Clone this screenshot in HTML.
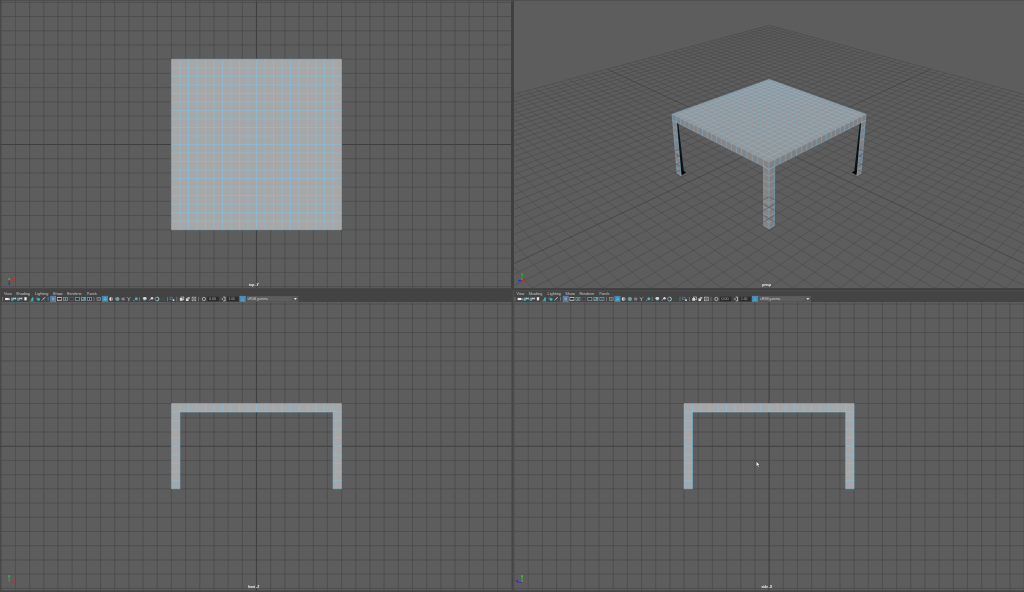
<!DOCTYPE html>
<html><head><meta charset="utf-8"><title>Maya four view</title>
<style>
html,body{margin:0;padding:0;background:#5d5d5d;}
body{width:1024px;height:592px;overflow:hidden;position:relative;font-family:"Liberation Sans",sans-serif;}
svg{position:absolute;left:0;top:0;display:block}
text{font-family:"Liberation Sans",sans-serif}
</style></head><body>
<svg width="1024" height="592" viewBox="0 0 1024 592">
<defs>
<clipPath id="cTL"><rect x="0" y="0" width="511.1" height="288.2"/></clipPath>
<clipPath id="cTR"><rect x="513.85" y="0" width="510.15" height="288.2"/></clipPath>
<clipPath id="cBL"><rect x="0" y="302" width="512" height="290"/></clipPath>
<clipPath id="cBR"><rect x="513.4" y="302" width="510.6" height="290"/></clipPath>
</defs>
<rect width="1024" height="592" fill="#5d5d5d"/>

<g clip-path="url(#cTL)" stroke="#494949" stroke-width="0.7" fill="none">
<path d="M1.26 0V288.6M15.44 0V288.6M29.62 0V288.6M43.8 0V288.6M57.98 0V288.6M72.16 0V288.6M86.34 0V288.6M100.52 0V288.6M114.7 0V288.6M128.88 0V288.6M143.06 0V288.6M157.24 0V288.6M171.42 0V288.6M185.6 0V288.6M199.78 0V288.6M213.96 0V288.6M228.14 0V288.6M242.32 0V288.6M270.68 0V288.6M284.86 0V288.6M299.04 0V288.6M313.22 0V288.6M327.4 0V288.6M341.58 0V288.6M355.76 0V288.6M369.94 0V288.6M384.12 0V288.6M398.3 0V288.6M412.48 0V288.6M426.66 0V288.6M440.84 0V288.6M455.02 0V288.6M469.2 0V288.6M483.38 0V288.6M497.56 0V288.6M511.74 0V288.6M0 2.35H511.6M0 16.56H511.6M0 30.78H511.6M0 45H511.6M0 59.21H511.6M0 73.42H511.6M0 87.64H511.6M0 101.86H511.6M0 116.07H511.6M0 130.28H511.6M0 158.72H511.6M0 172.93H511.6M0 187.14H511.6M0 201.36H511.6M0 215.57H511.6M0 229.79H511.6M0 244H511.6M0 258.22H511.6M0 272.44H511.6M0 286.65H511.6"/>
<path stroke="#404040" stroke-width="1.15" d="M256.5 0V288.6M0 144.5H511.6"/>
</g>
<g clip-path="url(#cBL)" stroke="#494949" stroke-width="0.7" fill="none">
<path d="M1.26 302V592M15.44 302V592M29.62 302V592M43.8 302V592M57.98 302V592M72.16 302V592M86.34 302V592M100.52 302V592M114.7 302V592M128.88 302V592M143.06 302V592M157.24 302V592M171.42 302V592M185.6 302V592M199.78 302V592M213.96 302V592M228.14 302V592M242.32 302V592M270.68 302V592M284.86 302V592M299.04 302V592M313.22 302V592M327.4 302V592M341.58 302V592M355.76 302V592M369.94 302V592M384.12 302V592M398.3 302V592M412.48 302V592M426.66 302V592M440.84 302V592M455.02 302V592M469.2 302V592M483.38 302V592M497.56 302V592M511.74 302V592M0 304.05H511.6M0 318.26H511.6M0 332.48H511.6M0 346.69H511.6M0 360.91H511.6M0 375.12H511.6M0 389.34H511.6M0 403.56H511.6M0 417.77H511.6M0 431.99H511.6M0 460.41H511.6M0 474.63H511.6M0 488.84H511.6M0 503.06H511.6M0 517.27H511.6M0 531.49H511.6M0 545.7H511.6M0 559.92H511.6M0 574.13H511.6M0 588.35H511.6"/>
<path stroke="#404040" stroke-width="1.15" d="M256.5 302V592M0 446.2H511.6"/>
</g>
<g clip-path="url(#cBR)" stroke="#494949" stroke-width="0.7" fill="none">
<path d="M514.04 302V592M528.21 302V592M542.38 302V592M556.55 302V592M570.72 302V592M584.89 302V592M599.06 302V592M613.23 302V592M627.4 302V592M641.57 302V592M655.74 302V592M669.91 302V592M684.08 302V592M698.25 302V592M712.42 302V592M726.59 302V592M740.76 302V592M754.93 302V592M783.27 302V592M797.44 302V592M811.61 302V592M825.78 302V592M839.95 302V592M854.12 302V592M868.29 302V592M882.46 302V592M896.63 302V592M910.8 302V592M924.97 302V592M939.14 302V592M953.31 302V592M967.48 302V592M981.65 302V592M995.82 302V592M1009.99 302V592M1024.16 302V592M513.6 304.05H1024M513.6 318.26H1024M513.6 332.48H1024M513.6 346.69H1024M513.6 360.91H1024M513.6 375.12H1024M513.6 389.34H1024M513.6 403.56H1024M513.6 417.77H1024M513.6 431.99H1024M513.6 460.41H1024M513.6 474.63H1024M513.6 488.84H1024M513.6 503.06H1024M513.6 517.27H1024M513.6 531.49H1024M513.6 545.7H1024M513.6 559.92H1024M513.6 574.13H1024M513.6 588.35H1024"/>
<path stroke="#404040" stroke-width="1.15" d="M769.1 302V592M513.6 446.2H1024"/>
</g>
<rect x="171.42" y="59.21" width="170.16" height="170.58" fill="#a8a7a7"/>
<g stroke="#74c8f0" stroke-width="0.95" stroke-opacity="0.5" fill="none"><path d="M171.42 59.21V229.79M179.93 59.21V229.79M188.44 59.21V229.79M196.94 59.21V229.79M205.45 59.21V229.79M213.96 59.21V229.79M222.47 59.21V229.79M230.98 59.21V229.79M239.48 59.21V229.79M247.99 59.21V229.79M256.5 59.21V229.79M265.01 59.21V229.79M273.52 59.21V229.79M282.02 59.21V229.79M290.53 59.21V229.79M299.04 59.21V229.79M307.55 59.21V229.79M316.06 59.21V229.79M324.56 59.21V229.79M333.07 59.21V229.79M341.58 59.21V229.79"/><path d="M171.42 59.21H341.58M171.42 67.74H341.58M171.42 76.27H341.58M171.42 84.8H341.58M171.42 93.33H341.58M171.42 101.86H341.58M171.42 110.38H341.58M171.42 118.91H341.58M171.42 127.44H341.58M171.42 135.97H341.58M171.42 144.5H341.58M171.42 153.03H341.58M171.42 161.56H341.58M171.42 170.09H341.58M171.42 178.62H341.58M171.42 187.14H341.58M171.42 195.67H341.58M171.42 204.2H341.58M171.42 212.73H341.58M171.42 221.26H341.58M171.42 229.79H341.58"/></g>
<path d="M171.42 403.56H341.58V488.84H333.07V412.06H179.93V488.84H171.42Z" fill="#a8a7a7"/>
<g stroke="#74c8f0" stroke-width="0.95" stroke-opacity="0.5" fill="none"><path d="M171.42 403.56V412.06M179.93 403.56V412.06M188.44 403.56V412.06M196.94 403.56V412.06M205.45 403.56V412.06M213.96 403.56V412.06M222.47 403.56V412.06M230.98 403.56V412.06M239.48 403.56V412.06M247.99 403.56V412.06M256.5 403.56V412.06M265.01 403.56V412.06M273.52 403.56V412.06M282.02 403.56V412.06M290.53 403.56V412.06M299.04 403.56V412.06M307.55 403.56V412.06M316.06 403.56V412.06M324.56 403.56V412.06M333.07 403.56V412.06M341.58 403.56V412.06M171.42 412.06V488.84M179.93 412.06V488.84M333.07 412.06V488.84M341.58 412.06V488.84"/><path d="M171.42 403.56H341.58M171.42 412.06H341.58M171.42 420.59H179.93M333.07 420.59H341.58M171.42 429.13H179.93M333.07 429.13H341.58M171.42 437.66H179.93M333.07 437.66H341.58M171.42 446.19H179.93M333.07 446.19H341.58M171.42 454.72H179.93M333.07 454.72H341.58M171.42 463.25H179.93M333.07 463.25H341.58M171.42 471.78H179.93M333.07 471.78H341.58M171.42 480.31H179.93M333.07 480.31H341.58M171.42 488.84H179.93M333.07 488.84H341.58"/></g>
<path d="M683.97 403.56H854.13V488.84H845.62V412.06H692.48V488.84H683.97Z" fill="#a8a7a7"/>
<g stroke="#74c8f0" stroke-width="0.95" stroke-opacity="0.5" fill="none"><path d="M683.97 403.56V412.06M692.48 403.56V412.06M700.99 403.56V412.06M709.49 403.56V412.06M718 403.56V412.06M726.51 403.56V412.06M735.02 403.56V412.06M743.53 403.56V412.06M752.03 403.56V412.06M760.54 403.56V412.06M769.05 403.56V412.06M777.56 403.56V412.06M786.07 403.56V412.06M794.57 403.56V412.06M803.08 403.56V412.06M811.59 403.56V412.06M820.1 403.56V412.06M828.61 403.56V412.06M837.11 403.56V412.06M845.62 403.56V412.06M854.13 403.56V412.06M683.97 412.06V488.84M692.48 412.06V488.84M845.62 412.06V488.84M854.13 412.06V488.84"/><path d="M683.97 403.56H854.13M683.97 412.06H854.13M683.97 420.59H692.48M845.62 420.59H854.13M683.97 429.13H692.48M845.62 429.13H854.13M683.97 437.66H692.48M845.62 437.66H854.13M683.97 446.19H692.48M845.62 446.19H854.13M683.97 454.72H692.48M845.62 454.72H854.13M683.97 463.25H692.48M845.62 463.25H854.13M683.97 471.78H692.48M845.62 471.78H854.13M683.97 480.31H692.48M845.62 480.31H854.13M683.97 488.84H692.48M845.62 488.84H854.13"/></g>
<g clip-path="url(#cTR)">
<path d="M769.06,25.34L328.3,144.58M769.06,25.34L1209.81,144.58M773.66,26.59L330.51,148.3M764.45,26.59L1207.6,148.3M778.33,27.85L332.78,152.12M759.78,27.85L1205.34,152.12M783.08,29.13L335.1,156.03M755.04,29.13L1203.01,156.03M787.89,30.44L337.49,160.06M750.22,30.44L1200.62,160.06M792.78,31.76L339.95,164.2M745.33,31.76L1198.16,164.2M797.75,33.11L342.48,168.45M740.36,33.11L1195.64,168.45M802.8,34.47L345.07,172.82M735.31,34.47L1193.04,172.82M807.93,35.86L347.74,177.32M730.18,35.86L1190.37,177.32M813.14,37.27L350.49,181.95M724.97,37.27L1187.62,181.95M818.43,38.7L353.33,186.71M719.68,38.7L1184.79,186.71M823.82,40.16L356.24,191.63M714.3,40.16L1181.87,191.63M829.29,41.64L359.25,196.69M708.83,41.64L1178.86,196.69M834.85,43.14L362.35,201.9M703.27,43.14L1175.77,201.9M840.5,44.67L365.55,207.29M697.61,44.67L1172.57,207.29M846.25,46.23L368.84,212.84M691.86,46.23L1169.27,212.84M852.1,47.81L372.25,218.58M686.02,47.81L1165.86,218.58M858.04,49.42L375.77,224.5M680.07,49.42L1162.34,224.5M864.1,51.05L379.41,230.62M674.02,51.05L1158.7,230.62M870.25,52.72L383.17,236.96M667.86,52.72L1154.94,236.96M876.52,54.41L387.06,243.51M661.6,54.41L1151.05,243.51M882.89,56.14L391.1,250.3M655.22,56.14L1147.02,250.3M889.38,57.9L395.27,257.33M648.73,57.9L1142.84,257.33M895.99,59.68L399.6,264.62M642.12,59.68L1138.51,264.62M902.72,61.5L404.09,272.18M635.39,61.5L1134.02,272.18M909.58,63.36L408.76,280.04M628.54,63.36L1129.36,280.04M916.56,65.25L413.6,288.19M621.56,65.25L1124.51,288.19M923.67,67.17L418.64,296.67M614.45,67.17L1119.47,296.67M938.3,71.13L429.34,314.68M599.81,71.13L1108.78,314.68M945.83,73.17L435.02,324.26M592.28,73.17L1103.09,324.26M953.5,75.24L440.96,334.24M584.61,75.24L1097.16,334.24M961.33,77.36L447.15,344.67M576.78,77.36L1090.96,344.67M969.31,79.52L453.62,355.56M568.8,79.52L1084.49,355.56M977.46,81.72L460.39,366.96M560.66,81.72L1077.72,366.96M985.77,83.97L467.48,378.89M552.35,83.97L1070.63,378.89M994.25,86.26L474.91,391.4M543.87,86.26L1063.2,391.4M1002.9,88.61L482.71,404.53M535.21,88.61L1055.4,404.53M1011.74,91L490.9,418.33M526.38,91L1047.21,418.33M1020.76,93.44L499.52,432.84M517.35,93.44L1038.59,432.84M1029.98,95.93L508.6,448.12M508.14,95.93L1029.51,448.12M1039.39,98.48L518.18,464.25M498.72,98.48L1019.93,464.25M1049.01,101.08L528.3,481.28M489.1,101.08L1009.81,481.28M1058.85,103.74L539.01,499.31M479.26,103.74L999.11,499.31M1068.9,106.46L550.35,518.41M469.21,106.46L987.76,518.41M1079.19,109.24L562.4,538.69M458.93,109.24L975.71,538.69M1089.7,112.09L575.21,560.26M448.41,112.09L962.9,560.26M1100.46,115L588.87,583.25M437.65,115L949.25,583.25M1111.48,117.98L603.45,607.8M426.64,117.98L934.67,607.8M1122.75,121.03L619.05,634.07M415.36,121.03L919.06,634.07M1134.29,124.15L635.8,662.26M403.82,124.15L902.32,662.26M1146.12,127.35L653.81,692.58M392,127.35L884.31,692.58M1158.23,130.63L673.23,725.28M379.88,130.63L864.88,725.28M1170.64,133.99L694.25,760.66M367.47,133.99L843.86,760.66M1183.37,137.43L717.06,799.06M354.74,137.43L821.06,799.06M1196.42,140.96L741.9,840.88M341.69,140.96L796.21,840.88M1209.81,144.58L769.06,886.6M328.3,144.58L769.06,886.6" stroke="#494949" stroke-width="0.55" fill="none"/>
<path d="M930.92,69.13L423.88,305.49M607.2,69.13L1114.23,305.49" stroke="#3c3c3c" stroke-width="0.62" fill="none"/>
<polygon points="677.08,173.37 681.01,175.75 676.63,122.49 672.54,120.42" fill="#888282"/>
<polygon points="861.04,173.37 857.1,175.75 861.48,122.49 865.57,120.42" fill="#847f7f"/>
<polygon points="676.8,122.8 678.3,123.5 683.8,171 681.5,174.4" fill="#0d1418"/>
<polygon points="681.6,170.3 686.4,172.3 682,174.9" fill="#040404"/>
<polygon points="861.3,122.8 859.8,123.5 854.3,171 856.6,174.4" fill="#0d1418"/>
<polygon points="856.5,170.3 851.7,172.3 856.1,174.9" fill="#040404"/>
<polygon points="763.69,225.74 769.06,228.99 769.06,169.33 763.38,166.45" fill="#888282"/>
<polygon points="774.43,225.74 769.06,228.99 769.06,169.33 774.74,166.45" fill="#847f7f"/>
<polygon points="672.54,120.42 769.06,169.33 769.06,162.27 672.01,114.21" fill="#888282"/>
<polygon points="865.57,120.42 769.06,169.33 769.06,162.27 866.11,114.21" fill="#847f7f"/>
<polygon points="769.06,79.36 866.11,114.21 769.06,162.27 672.01,114.21" fill="#979596"/>
<g stroke="#74c8f0" stroke-width="0.8" stroke-opacity="0.45" fill="none">
<path d="M677.08,173.37L681.01,175.75M676.59,167.73L680.54,170.08M676.1,162.04L680.07,164.36M675.61,156.28L679.6,158.57M675.11,150.46L679.12,152.72M674.61,144.58L678.63,146.8M674.1,138.64L678.14,140.82M673.59,132.63L677.64,134.78M673.06,126.56L677.14,128.67M672.54,120.42L676.63,122.49M763.69,225.74L769.06,228.99M763.66,219.48L769.06,222.69M763.62,213.13L769.06,216.31M763.59,206.71L769.06,209.85M763.55,200.21L769.06,203.31M763.52,193.63L769.06,196.69M763.48,186.97L769.06,189.98M763.45,180.21L769.06,183.18M763.41,173.38L769.06,176.3M763.38,166.45L769.06,169.33M672.54,120.42L769.06,169.33M672.01,114.21L769.06,162.27M769.06,79.36L866.11,114.21M764.84,80.87L861.99,116.25M760.57,82.4L857.81,118.32M756.23,83.96L853.57,120.42M751.84,85.54L849.25,122.56M747.38,87.14L844.86,124.73M742.86,88.76L840.4,126.94M738.28,90.41L835.86,129.19M733.62,92.08L831.25,131.47M728.9,93.78L826.55,133.8M724.11,95.5L821.78,136.16M719.25,97.24L816.92,138.57M714.31,99.02L811.98,141.02M709.3,100.82L806.95,143.51M704.22,102.64L801.82,146.04M699.06,104.5L796.61,148.63M693.81,106.38L791.3,151.25M688.49,108.29L785.89,153.93M683.08,110.23L780.39,156.66M677.59,112.21L774.77,159.44"/>
<path d="M677.08,173.37L672.54,120.42M681.01,175.75L676.63,122.49M861.04,173.37L865.57,120.42M857.1,175.75L861.48,122.49M763.69,225.74L763.38,166.45M769.06,228.99L769.06,169.33M774.43,225.74L774.74,166.45M672.54,120.42L672.01,114.21M676.63,122.49L676.12,116.25M680.79,124.6L680.3,118.32M685.02,126.74L684.55,120.42M689.32,128.92L688.86,122.56M693.68,131.14L693.25,124.73M698.12,133.39L697.71,126.94M702.64,135.67L702.25,129.19M707.23,138L706.87,131.47M711.9,140.37L711.56,133.8M716.65,142.77L716.33,136.16M721.48,145.22L721.19,138.57M726.4,147.71L726.14,141.02M731.4,150.25L731.17,143.51M736.49,152.83L736.29,146.04M741.68,155.46L741.5,148.63M746.95,158.13L746.81,151.25M752.33,160.85L752.22,153.93M757.8,163.63L757.73,156.66M763.38,166.45L763.34,159.44M769.06,169.33L769.06,162.27M865.57,120.42L866.11,114.21M861.48,122.49L861.99,116.25M857.32,124.6L857.81,118.32M853.09,126.74L853.57,120.42M848.8,128.92L849.25,122.56M844.43,131.14L844.86,124.73M839.99,133.39L840.4,126.94M835.47,135.67L835.86,129.19M830.88,138L831.25,131.47M826.21,140.37L826.55,133.8M821.47,142.77L821.78,136.16M816.63,145.22L816.92,138.57M811.72,147.71L811.98,141.02M806.71,150.25L806.95,143.51M801.62,152.83L801.82,146.04M796.44,155.46L796.61,148.63M791.16,158.13L791.3,151.25M785.79,160.85L785.89,153.93M780.31,163.63L780.39,156.66M774.74,166.45L774.77,159.44"/>
<path d="M861.04,173.37L857.1,175.75M861.52,167.73L857.57,170.08M862.01,162.04L858.04,164.36M862.5,156.28L858.52,158.57M863,150.46L859,152.72M863.5,144.58L859.48,146.8M864.01,138.64L859.97,140.82M864.53,132.63L860.47,134.78M865.05,126.56L860.97,128.67M865.57,120.42L861.48,122.49M774.43,225.74L769.06,228.99M774.46,219.48L769.06,222.69M774.49,213.13L769.06,216.31M774.53,206.71L769.06,209.85M774.56,200.21L769.06,203.31M774.59,193.63L769.06,196.69M774.63,186.97L769.06,189.98M774.66,180.21L769.06,183.18M774.7,173.38L769.06,176.3M774.74,166.45L769.06,169.33M865.57,120.42L769.06,169.33M866.11,114.21L769.06,162.27M769.06,79.36L672.01,114.21M773.27,80.87L676.12,116.25M777.55,82.4L680.3,118.32M781.88,83.96L684.55,120.42M786.27,85.54L688.86,122.56M790.73,87.14L693.25,124.73M795.25,88.76L697.71,126.94M799.84,90.41L702.25,129.19M804.49,92.08L706.87,131.47M809.21,93.78L711.56,133.8M814,95.5L716.33,136.16M818.87,97.24L721.19,138.57M823.8,99.02L726.14,141.02M828.81,100.82L731.17,143.51M833.89,102.64L736.29,146.04M839.06,104.5L741.5,148.63M844.3,106.38L746.81,151.25M849.62,108.29L752.22,153.93M855.03,110.23L757.73,156.66M860.53,112.21L763.34,159.44"/>
</g>
<clipPath id="cLow">
<polygon points="677.08,173.37 681.01,175.75 678.63,146.8 674.61,144.58"/>
<polygon points="861.04,173.37 857.1,175.75 859.48,146.8 863.5,144.58"/>
<polygon points="763.69,225.74 769.06,228.99 769.06,196.69 763.52,193.63"/>
<polygon points="774.43,225.74 769.06,228.99 769.06,196.69 774.59,193.63"/>
</clipPath>
<g clip-path="url(#cLow)" opacity="0.8"><path d="M769.06,91L627.39,144.58M769.06,91L910.73,144.58M775.51,93.44L633.51,148.3M762.6,93.44L904.61,148.3M782.1,95.93L639.79,152.12M756.01,95.93L898.33,152.12M788.84,98.48L646.24,156.03M749.28,98.48L891.87,156.03M795.72,101.08L652.87,160.06M742.39,101.08L885.25,160.06M802.75,103.74L659.68,164.2M735.36,103.74L878.44,164.2M809.95,106.46L666.68,168.45M728.17,106.46L871.44,168.45M817.3,109.24L673.88,172.82M720.81,109.24L864.24,172.82M824.82,112.09L681.28,177.32M713.29,112.09L856.83,177.32M840.39,117.98L696.76,186.71M697.72,117.98L841.36,186.71M848.46,121.03L704.84,191.63M689.66,121.03L833.27,191.63M856.71,124.15L713.17,196.69M681.4,124.15L824.94,196.69M865.17,127.35L721.77,201.9M672.94,127.35L816.35,201.9M873.83,130.63L730.63,207.29M664.28,130.63L807.49,207.29M882.71,133.99L739.77,212.84M655.4,133.99L798.34,212.84M891.82,137.43L749.22,218.58M646.3,137.43L788.9,218.58M901.15,140.96L758.97,224.5M636.96,140.96L779.14,224.5M910.73,144.58L769.06,230.62M627.39,144.58L769.06,230.62" stroke="#454545" stroke-width="0.55" fill="none"/><path d="M930.92,69.13L423.88,305.49M607.2,69.13L1114.23,305.49" stroke="#3c3c3c" stroke-width="0.62" fill="none"/></g>
</g>
<rect x="511.1" y="0" width="2.75" height="290.3" fill="#3e3e3e"/>
<rect x="513.85" y="288.2" width="510.15" height="2.1" fill="#3e3e3e"/>
<rect x="0" y="288.2" width="513.4" height="13.8" fill="#434343"/>
<rect x="513.4" y="290.3" width="510.6" height="11.7" fill="#444444"/>
<rect x="513.4" y="290.3" width="510.6" height="0.65" fill="#4c4c4c"/>
<rect x="513.3" y="290.3" width="0.7" height="11.7" fill="#505050"/>
<rect x="511.9" y="302" width="1.5" height="290" fill="#444444"/>
<rect x="0" y="0" width="1024" height="0.8" fill="#4d4f4d"/>
<rect x="0" y="0" width="0.8" height="592" fill="#454545"/>
<rect x="0" y="590.4" width="1024" height="1.6" fill="#454545"/>
<g transform="translate(0,0)">
<g font-size="3.75" fill="#c6c6ca" style="filter:grayscale(1)">
<text x="3.95" y="294.55" textLength="7.9" lengthAdjust="spacingAndGlyphs">View</text>
<text x="16" y="294.55" textLength="13.95" lengthAdjust="spacingAndGlyphs">Shading</text>
<text x="35" y="294.55" textLength="13.5" lengthAdjust="spacingAndGlyphs">Lighting</text>
<text x="52.8" y="294.55" textLength="9.9" lengthAdjust="spacingAndGlyphs">Show</text>
<text x="67" y="294.55" textLength="14.8" lengthAdjust="spacingAndGlyphs">Renderer</text>
<text x="87.1" y="294.55" textLength="9.9" lengthAdjust="spacingAndGlyphs">Panels</text>
</g>
<rect x="2.15" y="296.9" width="0.6" height="4.3" fill="#8c8c8c"/>
<rect x="47.8" y="296.9" width="0.6" height="4.3" fill="#8c8c8c"/>
<rect x="93.7" y="296.9" width="0.6" height="4.3" fill="#8c8c8c"/>
<rect x="139.3" y="296.9" width="0.6" height="4.3" fill="#8c8c8c"/>
<rect x="167.2" y="296.9" width="0.6" height="4.3" fill="#8c8c8c"/>
<rect x="176.6" y="296.9" width="0.6" height="4.3" fill="#8c8c8c"/>
<rect x="198.2" y="296.9" width="0.6" height="4.3" fill="#8c8c8c"/>
<rect x="5.1" y="297.9" width="3.7" height="2.2" fill="#ececec"/>
<rect x="9.1" y="298.4" width="0.9" height="1.7" fill="#d0d0d0"/>
<rect x="11.1" y="297.7" width="2.3" height="1.3" fill="#5f9aa6"/>
<rect x="11.1" y="298.8" width="2.3" height="2" fill="#40b9c2" rx="0.5"/>
<path d="M13.75 297.4v2.2M15.7 297.4v2.2M13.75 298.5h2" stroke="#e6e6e6" stroke-width="0.7" fill="none"/>
<rect x="17.2" y="297.7" width="2.3" height="1.3" fill="#5f9aa6"/>
<rect x="17.2" y="298.8" width="2.3" height="2" fill="#3fa4c4" rx="0.5"/>
<path d="M19.85 297.4v2.2M21.8 297.4v2.2M19.85 298.5h2" stroke="#e6e6e6" stroke-width="0.7" fill="none"/>
<rect x="24.2" y="297.2" width="2.6" height="3.1" fill="#9a9a9a"/>
<rect x="24.6" y="297.2" width="1.8" height="3.1" fill="#ececec"/>
<path d="M32.3 297.2h0.9l0.2 3.6h-2.9z" fill="#40b9c2"/><path d="M29.3 301.2h4.4" stroke="#7c7c7c" stroke-width="0.7"/>
<path d="M35.9 298.9l1.7-1.7" stroke="#9a9a9a" stroke-width="0.6"/><ellipse cx="38.55" cy="299.45" rx="1.45" ry="1.35" fill="#40b9c2"/>
<path d="M45 297.3l-2.2 2.3" stroke="#e6e6e6" stroke-width="0.9"/><path d="M42.9 299.5l-1 1.2" stroke="#40b9c2" stroke-width="0.9"/><path d="M44.2 300.4l1.2 0.8" stroke="#8a8a8a" stroke-width="0.5"/>
<rect x="50.2" y="295.9" width="5.8" height="6" fill="#5590c4"/>
<rect x="50.85" y="296.55" width="4.5" height="4.7" fill="#426f9a"/>
<rect x="51.7" y="297.3" width="2.9" height="3.1" fill="#959595"/>
<rect x="57" y="297" width="4.8" height="3.85" fill="#b6b6b6"/>
<rect x="57.7" y="298.1" width="3.45" height="1.5" fill="#151515"/>
<rect x="63.1" y="297" width="4.7" height="3.85" fill="#9a9a9a"/>
<rect x="63.8" y="297.7" width="3.3" height="2.5" fill="#1f3a3c"/>
<rect x="64.7" y="297.9" width="1.5" height="2.3" fill="#40b9c2" rx="0.6"/>
<rect x="69.1" y="297" width="4.5" height="3.85" fill="#585858"/>
<rect x="69.9" y="297.8" width="2.9" height="2.3" fill="#3c3c3c"/>
<rect x="75" y="297" width="4.7" height="3.85" fill="#9a9a9a"/>
<rect x="75.7" y="297.7" width="3.3" height="2.5" fill="#21403f"/>
<rect x="81.1" y="297" width="4.7" height="3.85" fill="#9a9a9a"/>
<rect x="81.8" y="297.7" width="3.3" height="2.5" fill="#2d8d96"/>
<rect x="83.6" y="297.7" width="1.5" height="1.3" fill="#40b9c2"/>
<rect x="82" y="297.9" width="0.9" height="0.9" fill="#1a1a1a"/>
<rect x="87.1" y="297" width="4.7" height="3.85" fill="#9a9a9a"/>
<rect x="87.8" y="297.7" width="3.3" height="2.5" fill="#1c2c44"/>
<rect x="89" y="297.8" width="0.9" height="2.4" fill="#40b9c2"/>
<rect x="97" y="297.3" width="3.6" height="3.4" fill="none" stroke="#9a9a9a" stroke-width="0.6"/><path d="M98.8 297.3v3.4M97 299h3.6" stroke="#8a8a8a" stroke-width="0.4"/>
<rect x="101.9" y="295.9" width="6.1" height="6" fill="#4a82b0"/>
<circle cx="104.3" cy="299.8" r="1.1" fill="#3fb4c8"/><circle cx="105.9" cy="299.6" r="1" fill="#46c0cc"/><circle cx="105" cy="297.9" r="1" fill="#58a8cc"/>
<path d="M111.2 297a2 2.05 0 0 0 0 4.1z" fill="#d8d8d8"/><path d="M111.2 297a2 2.05 0 0 1 0 4.1z" fill="#8c8c8c"/>
<circle cx="117.4" cy="299" r="2.1" fill="#6fa5ab"/><path d="M115.3 299h4.2M117.4 296.9v4.2" stroke="#8a8a8a" stroke-width="0.4"/>
<rect x="121.5" y="297.4" width="3.3" height="3.2" fill="#7e7e7e" rx="0.8"/>
<path d="M127.2 297.3l1.6 1.6l1.6-1.6M128.8 298.9v2.2" stroke="#c4c4c4" stroke-width="0.7" fill="none"/>
<circle cx="136.3" cy="298.8" r="1.5" fill="#40b9c2"/><path d="M133.2 300.4h1.6" stroke="#8a8a8a" stroke-width="0.8"/>
<ellipse cx="144.8" cy="298.5" rx="1.9" ry="1.4" fill="#d8d8d8"/><path d="M143.4 300.6h2.8" stroke="#4aa9b4" stroke-width="0.5"/>
<path d="M149.3 300.6l2.2-2.6" stroke="#9a9a9a" stroke-width="1"/><circle cx="152" cy="298.2" r="1.2" fill="#d8d8d8"/>
<path d="M157 297.1a1.9 1.9 0 0 0 0 3.8" stroke="#40b9c2" stroke-width="0.8" fill="none"/><path d="M157 297.1a1.9 1.9 0 0 1 0 3.8" stroke="#d8d8d8" stroke-width="0.8" fill="none"/>
<rect x="160.5" y="296.9" width="4.9" height="4.2" fill="#3a4a46"/>
<rect x="170" y="297.2" width="2.6" height="2.4" fill="none" stroke="#3f8fb8" stroke-width="0.6"/>
<rect x="172.7" y="299.3" width="1.6" height="1.7" fill="#d8d8d8"/>
<rect x="179.8" y="298" width="2.8" height="2.8" fill="#d8d8d8"/><rect x="181" y="297" width="2.8" height="2.8" fill="none" stroke="#d8d8d8" stroke-width="0.6"/>
<rect x="185.9" y="298.4" width="2.7" height="2.6" fill="#d8d8d8"/>
<rect x="187.4" y="297" width="2.4" height="1.8" fill="#b0b0b0"/>
<rect x="192.1" y="297.1" width="3.7" height="3.7" fill="none" stroke="#bdbdbd" stroke-width="0.6"/><path d="M192.1 297.1l3.7 3.7M195.8 297.1l-3.7 3.7" stroke="#bdbdbd" stroke-width="0.5"/>
<circle cx="203.85" cy="299" r="1.65" fill="none" stroke="#c8c8c8" stroke-width="0.75"/>
<rect x="207.4" y="296.7" width="11.4" height="4.6" fill="#2b2b2b"/>
<text x="208.9" y="300.2" font-size="3.4" fill="#b0b0b0" style="filter:grayscale(1)" textLength="7.1" lengthAdjust="spacingAndGlyphs">0.00</text>
<path d="M221.5 299l1.3-1.1v2.2z" fill="#d8d8d8"/>
<path d="M223.2 297.1h1.9v3.8h-1.9" fill="none" stroke="#d8d8d8" stroke-width="0.75"/>
<rect x="227" y="296.7" width="11.5" height="4.6" fill="#2b2b2b"/>
<text x="228.5" y="300.2" font-size="3.4" fill="#b0b0b0" style="filter:grayscale(1)" textLength="6.4" lengthAdjust="spacingAndGlyphs">1.00</text>
<rect x="239.5" y="295.9" width="6.3" height="6" fill="#4f87b6"/>
<path d="M240.6 297.2l4.1 3.6M244.7 297.2l-4.1 3.6" stroke="#3fb9c4" stroke-width="0.5"/><path d="M241.4 300.2h2.5" stroke="#40b9c2" stroke-width="0.7"/>
<rect x="246.6" y="296.1" width="51.6" height="5.6" fill="#5d5d5d"/>
<rect x="291.6" y="296.1" width="6.6" height="5.6" fill="#585858"/>
<text x="247.6" y="300.45" font-size="3.75" fill="#c6c6c6" style="filter:grayscale(1)" textLength="20.3" lengthAdjust="spacingAndGlyphs">sRGB gamma</text>
<path d="M293.9 297.9h3l-1.5 2z" fill="#e0e0e0"/>
</g>
<g transform="translate(512.5,0)">
<g font-size="3.75" fill="#c6c6ca" style="filter:grayscale(1)">
<text x="3.95" y="294.55" textLength="7.9" lengthAdjust="spacingAndGlyphs">View</text>
<text x="16" y="294.55" textLength="13.95" lengthAdjust="spacingAndGlyphs">Shading</text>
<text x="35" y="294.55" textLength="13.5" lengthAdjust="spacingAndGlyphs">Lighting</text>
<text x="52.8" y="294.55" textLength="9.9" lengthAdjust="spacingAndGlyphs">Show</text>
<text x="67" y="294.55" textLength="14.8" lengthAdjust="spacingAndGlyphs">Renderer</text>
<text x="87.1" y="294.55" textLength="9.9" lengthAdjust="spacingAndGlyphs">Panels</text>
</g>
<rect x="2.15" y="296.9" width="0.6" height="4.3" fill="#8c8c8c"/>
<rect x="47.8" y="296.9" width="0.6" height="4.3" fill="#8c8c8c"/>
<rect x="93.7" y="296.9" width="0.6" height="4.3" fill="#8c8c8c"/>
<rect x="139.3" y="296.9" width="0.6" height="4.3" fill="#8c8c8c"/>
<rect x="167.2" y="296.9" width="0.6" height="4.3" fill="#8c8c8c"/>
<rect x="176.6" y="296.9" width="0.6" height="4.3" fill="#8c8c8c"/>
<rect x="198.2" y="296.9" width="0.6" height="4.3" fill="#8c8c8c"/>
<rect x="5.1" y="297.9" width="3.7" height="2.2" fill="#ececec"/>
<rect x="9.1" y="298.4" width="0.9" height="1.7" fill="#d0d0d0"/>
<rect x="11.1" y="297.7" width="2.3" height="1.3" fill="#5f9aa6"/>
<rect x="11.1" y="298.8" width="2.3" height="2" fill="#40b9c2" rx="0.5"/>
<path d="M13.75 297.4v2.2M15.7 297.4v2.2M13.75 298.5h2" stroke="#e6e6e6" stroke-width="0.7" fill="none"/>
<rect x="17.2" y="297.7" width="2.3" height="1.3" fill="#5f9aa6"/>
<rect x="17.2" y="298.8" width="2.3" height="2" fill="#3fa4c4" rx="0.5"/>
<path d="M19.85 297.4v2.2M21.8 297.4v2.2M19.85 298.5h2" stroke="#e6e6e6" stroke-width="0.7" fill="none"/>
<rect x="24.2" y="297.2" width="2.6" height="3.1" fill="#9a9a9a"/>
<rect x="24.6" y="297.2" width="1.8" height="3.1" fill="#ececec"/>
<path d="M32.3 297.2h0.9l0.2 3.6h-2.9z" fill="#40b9c2"/><path d="M29.3 301.2h4.4" stroke="#7c7c7c" stroke-width="0.7"/>
<path d="M35.9 298.9l1.7-1.7" stroke="#9a9a9a" stroke-width="0.6"/><ellipse cx="38.55" cy="299.45" rx="1.45" ry="1.35" fill="#40b9c2"/>
<path d="M45 297.3l-2.2 2.3" stroke="#e6e6e6" stroke-width="0.9"/><path d="M42.9 299.5l-1 1.2" stroke="#40b9c2" stroke-width="0.9"/><path d="M44.2 300.4l1.2 0.8" stroke="#8a8a8a" stroke-width="0.5"/>
<rect x="50.2" y="295.9" width="5.8" height="6" fill="#5590c4"/>
<rect x="50.85" y="296.55" width="4.5" height="4.7" fill="#426f9a"/>
<rect x="51.7" y="297.3" width="2.9" height="3.1" fill="#959595"/>
<rect x="57" y="297" width="4.8" height="3.85" fill="#b6b6b6"/>
<rect x="57.7" y="298.1" width="3.45" height="1.5" fill="#151515"/>
<rect x="63.1" y="297" width="4.7" height="3.85" fill="#9a9a9a"/>
<rect x="63.8" y="297.7" width="3.3" height="2.5" fill="#1f3a3c"/>
<rect x="64.7" y="297.9" width="1.5" height="2.3" fill="#40b9c2" rx="0.6"/>
<rect x="69.1" y="297" width="4.5" height="3.85" fill="#585858"/>
<rect x="69.9" y="297.8" width="2.9" height="2.3" fill="#3c3c3c"/>
<rect x="75" y="297" width="4.7" height="3.85" fill="#9a9a9a"/>
<rect x="75.7" y="297.7" width="3.3" height="2.5" fill="#21403f"/>
<rect x="81.1" y="297" width="4.7" height="3.85" fill="#9a9a9a"/>
<rect x="81.8" y="297.7" width="3.3" height="2.5" fill="#2d8d96"/>
<rect x="83.6" y="297.7" width="1.5" height="1.3" fill="#40b9c2"/>
<rect x="82" y="297.9" width="0.9" height="0.9" fill="#1a1a1a"/>
<rect x="87.1" y="297" width="4.7" height="3.85" fill="#9a9a9a"/>
<rect x="87.8" y="297.7" width="3.3" height="2.5" fill="#1c2c44"/>
<rect x="89" y="297.8" width="0.9" height="2.4" fill="#40b9c2"/>
<rect x="97" y="297.3" width="3.6" height="3.4" fill="none" stroke="#9a9a9a" stroke-width="0.6"/><path d="M98.8 297.3v3.4M97 299h3.6" stroke="#8a8a8a" stroke-width="0.4"/>
<rect x="101.9" y="295.9" width="6.1" height="6" fill="#4a82b0"/>
<circle cx="104.3" cy="299.8" r="1.1" fill="#3fb4c8"/><circle cx="105.9" cy="299.6" r="1" fill="#46c0cc"/><circle cx="105" cy="297.9" r="1" fill="#58a8cc"/>
<path d="M111.2 297a2 2.05 0 0 0 0 4.1z" fill="#d8d8d8"/><path d="M111.2 297a2 2.05 0 0 1 0 4.1z" fill="#8c8c8c"/>
<circle cx="117.4" cy="299" r="2.1" fill="#6fa5ab"/><path d="M115.3 299h4.2M117.4 296.9v4.2" stroke="#8a8a8a" stroke-width="0.4"/>
<rect x="121.5" y="297.4" width="3.3" height="3.2" fill="#7e7e7e" rx="0.8"/>
<path d="M127.2 297.3l1.6 1.6l1.6-1.6M128.8 298.9v2.2" stroke="#c4c4c4" stroke-width="0.7" fill="none"/>
<circle cx="136.3" cy="298.8" r="1.5" fill="#40b9c2"/><path d="M133.2 300.4h1.6" stroke="#8a8a8a" stroke-width="0.8"/>
<ellipse cx="144.8" cy="298.5" rx="1.9" ry="1.4" fill="#d8d8d8"/><path d="M143.4 300.6h2.8" stroke="#4aa9b4" stroke-width="0.5"/>
<path d="M149.3 300.6l2.2-2.6" stroke="#9a9a9a" stroke-width="1"/><circle cx="152" cy="298.2" r="1.2" fill="#d8d8d8"/>
<path d="M157 297.1a1.9 1.9 0 0 0 0 3.8" stroke="#40b9c2" stroke-width="0.8" fill="none"/><path d="M157 297.1a1.9 1.9 0 0 1 0 3.8" stroke="#d8d8d8" stroke-width="0.8" fill="none"/>
<rect x="160.5" y="296.9" width="4.9" height="4.2" fill="#3a4a46"/>
<rect x="170" y="297.2" width="2.6" height="2.4" fill="none" stroke="#3f8fb8" stroke-width="0.6"/>
<rect x="172.7" y="299.3" width="1.6" height="1.7" fill="#d8d8d8"/>
<rect x="179.8" y="298" width="2.8" height="2.8" fill="#d8d8d8"/><rect x="181" y="297" width="2.8" height="2.8" fill="none" stroke="#d8d8d8" stroke-width="0.6"/>
<rect x="185.9" y="298.4" width="2.7" height="2.6" fill="#d8d8d8"/>
<rect x="187.4" y="297" width="2.4" height="1.8" fill="#b0b0b0"/>
<rect x="192.1" y="297.1" width="3.7" height="3.7" fill="none" stroke="#bdbdbd" stroke-width="0.6"/><path d="M192.1 297.1l3.7 3.7M195.8 297.1l-3.7 3.7" stroke="#bdbdbd" stroke-width="0.5"/>
<circle cx="203.85" cy="299" r="1.65" fill="none" stroke="#c8c8c8" stroke-width="0.75"/>
<rect x="207.4" y="296.7" width="11.4" height="4.6" fill="#2b2b2b"/>
<text x="208.9" y="300.2" font-size="3.4" fill="#b0b0b0" style="filter:grayscale(1)" textLength="7.1" lengthAdjust="spacingAndGlyphs">0.00</text>
<path d="M221.5 299l1.3-1.1v2.2z" fill="#d8d8d8"/>
<path d="M223.2 297.1h1.9v3.8h-1.9" fill="none" stroke="#d8d8d8" stroke-width="0.75"/>
<rect x="227" y="296.7" width="11.5" height="4.6" fill="#2b2b2b"/>
<text x="228.5" y="300.2" font-size="3.4" fill="#b0b0b0" style="filter:grayscale(1)" textLength="6.4" lengthAdjust="spacingAndGlyphs">1.00</text>
<rect x="239.5" y="295.9" width="6.3" height="6" fill="#4f87b6"/>
<path d="M240.6 297.2l4.1 3.6M244.7 297.2l-4.1 3.6" stroke="#3fb9c4" stroke-width="0.5"/><path d="M241.4 300.2h2.5" stroke="#40b9c2" stroke-width="0.7"/>
<rect x="246.6" y="296.1" width="51.6" height="5.6" fill="#5d5d5d"/>
<rect x="291.6" y="296.1" width="6.6" height="5.6" fill="#585858"/>
<text x="247.6" y="300.45" font-size="3.75" fill="#c6c6c6" style="filter:grayscale(1)" textLength="20.3" lengthAdjust="spacingAndGlyphs">sRGB gamma</text>
<path d="M293.9 297.9h3l-1.5 2z" fill="#e0e0e0"/>
</g>
<g font-size="3.5" fill="#f2f2f2" font-weight="bold" text-anchor="middle" style="filter:grayscale(1)">
<text x="254" y="285.75" textLength="9.8" lengthAdjust="spacingAndGlyphs">top -Y</text><text x="766.6" y="285.9" textLength="8.9" lengthAdjust="spacingAndGlyphs">persp</text><text x="253.5" y="587.65" textLength="11.2" lengthAdjust="spacingAndGlyphs">front -Z</text><text x="766.8" y="587.65" textLength="10.6" lengthAdjust="spacingAndGlyphs">side -X</text>
</g>
<path d="M9.3 280.5V285" stroke="#2a2ad0" stroke-width="0.9"/><circle cx="9.3" cy="284" r="0.8" fill="#2a2ad0"/>
<path d="M9.4 280.5H13.3" stroke="#c62f2f" stroke-width="0.8"/><circle cx="14.3" cy="278.9" r="0.9" fill="#c62f2f"/>
<circle cx="9.2" cy="279" r="1" fill="#2fc32f"/>
<path d="M522 280.5V274" stroke="#2fc32f" stroke-width="0.8"/><circle cx="522" cy="274.2" r="0.8" fill="#2fc32f"/>
<path d="M522 280.5L519.6 280.7" stroke="#2a2ad0" stroke-width="0.8"/><circle cx="519" cy="280.6" r="0.9" fill="#2a2ad0"/>
<path d="M522 280.5L524.3 280.8" stroke="#c62f2f" stroke-width="0.8"/><circle cx="524.9" cy="280.8" r="0.9" fill="#c62f2f"/>
<path d="M9.2 582V576" stroke="#2fc32f" stroke-width="0.8"/><circle cx="9.1" cy="576" r="0.9" fill="#2fc32f"/>
<path d="M9.3 582H13.2" stroke="#c62f2f" stroke-width="0.8"/><circle cx="14.2" cy="581" r="0.9" fill="#c62f2f"/>
<circle cx="9.1" cy="581.3" r="0.8" fill="#2a6ad0"/>
<path d="M522.1 581.6V576" stroke="#2fc32f" stroke-width="0.9"/><circle cx="522" cy="576" r="1" fill="#2fc32f"/>
<path d="M522 582.4H517.5" stroke="#2a2ad0" stroke-width="0.8"/><circle cx="517" cy="580.9" r="1" fill="#2a2ad0"/>
<circle cx="522.3" cy="581.2" r="0.8" fill="#c6602f"/>
<path d="M756.3 461.4v5l1.15-1l0.9 1.9l0.85-0.4l-0.9-1.9l1.55-0.1z" fill="#f4f4f4" stroke="#222" stroke-width="0.35"/>
</svg></body></html>
